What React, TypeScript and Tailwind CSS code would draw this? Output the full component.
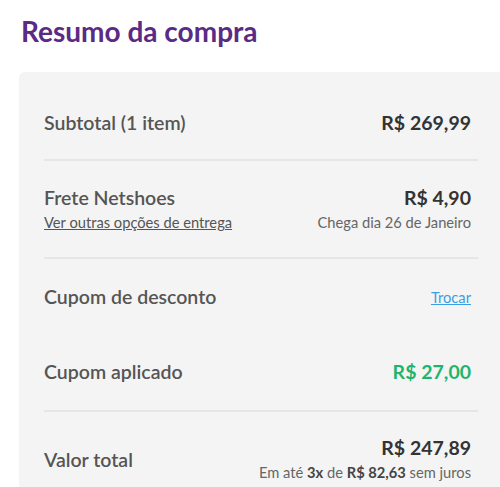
import React from "react";

function Row({ children, className = "" }: { children: React.ReactNode; className?: string }) {
  return <div className={`flex justify-between ${className}`}>{children}</div>;
}

export default function App() {
  return (
    <div className="min-h-[487px] bg-white font-['Lato',sans-serif] overflow-hidden">
      <h1 className="pl-[21px] pt-[14px] text-[28px] font-bold leading-[34px] text-[#5a2a85]">
        Resumo da compra
      </h1>
      <div className="ml-[19px] mt-[24px] -mr-4 rounded-tl-md bg-[#f4f4f4] pl-[25px] pr-[45px]">
        <Row className="items-center pt-[38px] pb-[23px]">
          <span className="text-[19.5px] font-semibold leading-[26px] text-[#555]">Subtotal (1 item)</span>
          <span className="text-[19.5px] font-bold leading-[26px] text-[#333]">R$ 269,99</span>
        </Row>
        <div className="-mr-[7px] h-[2px] bg-[#e6e6e6]" />
        <Row className="pt-[24px] pb-[24px]">
          <div className="flex flex-col">
            <span className="text-[19.5px] font-semibold leading-[26px] text-[#555]">Frete Netshoes</span>
            <a className="text-[14.7px] leading-[22px] text-[#555] underline">Ver outras opções de entrega</a>
          </div>
          <div className="flex flex-col items-end">
            <span className="text-[19.5px] font-bold leading-[26px] text-[#333]">R$ 4,90</span>
            <span className="text-[14.7px] leading-[22px] text-[#666]">Chega dia 26 de Janeiro</span>
          </div>
        </Row>
        <div className="-mr-[7px] h-[2px] bg-[#e6e6e6]" />
        <Row className="items-center pt-[25px]">
          <span className="text-[19.5px] font-semibold leading-[26px] text-[#555]">Cupom de desconto</span>
          <a className="text-[14.7px] text-[#3a9fe2] underline">Trocar</a>
        </Row>
        <Row className="items-center pt-[49px] pb-[25px]">
          <span className="text-[19.5px] font-semibold leading-[26px] text-[#555]">Cupom aplicado</span>
          <span className="text-[19.5px] font-bold leading-[26px] text-[#1fb46c]">R$ 27,00</span>
        </Row>
        <div className="-mr-[7px] h-[2px] bg-[#e6e6e6]" />
        <Row className="pt-[23px] pb-[8px]">
          <span className="mt-[12px] text-[19.5px] font-semibold leading-[26px] text-[#555]">Valor total</span>
          <div className="flex flex-col items-end">
            <span className="text-[19.5px] font-bold leading-[26px] text-[#333]">R$ 247,89</span>
            <span className="text-[14.7px] leading-[22px] text-[#666]">
              Em até <b className="text-[#444]">3x</b> de <b className="text-[#444]">R$ 82,63</b> sem juros
            </span>
          </div>
        </Row>
      </div>
    </div>
  );
}
